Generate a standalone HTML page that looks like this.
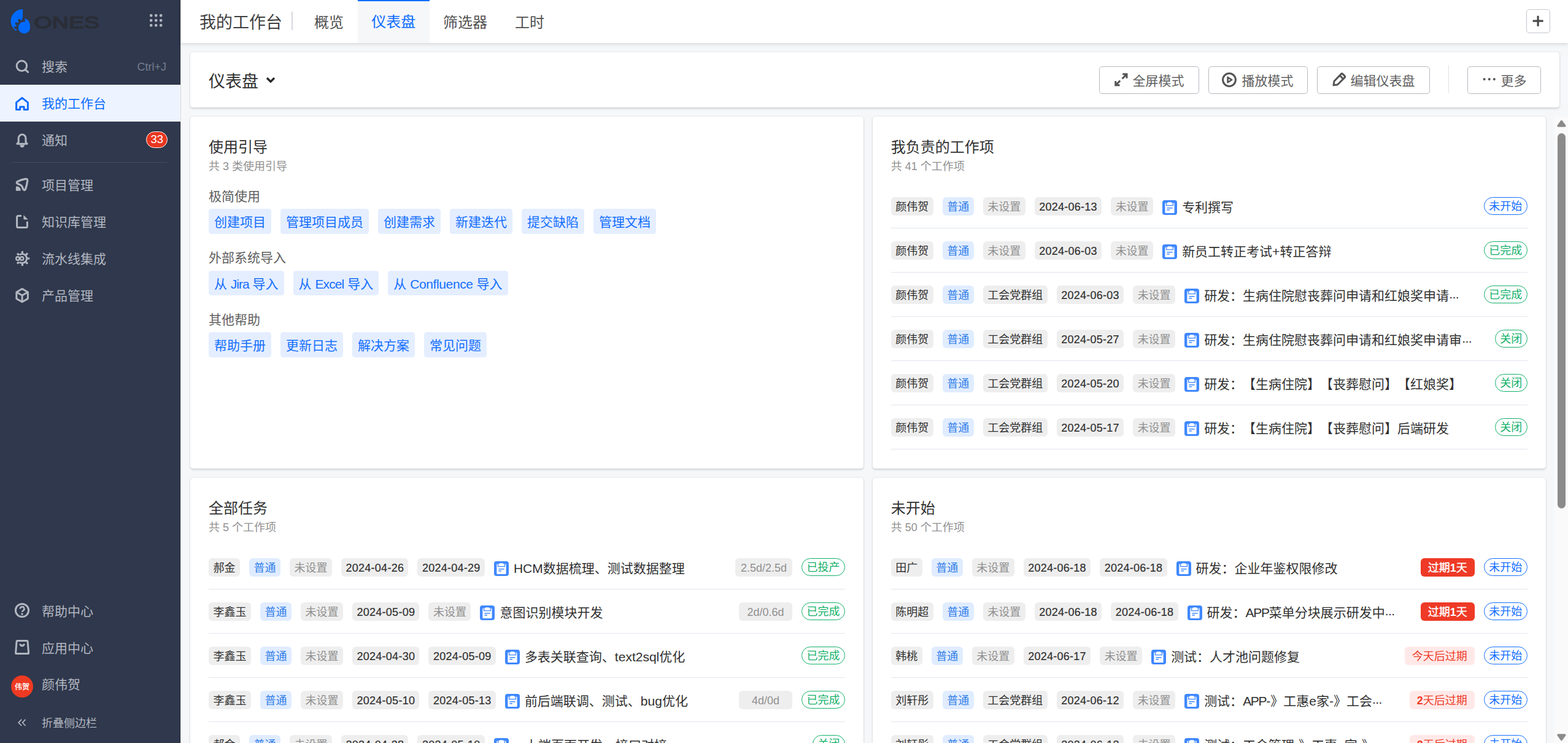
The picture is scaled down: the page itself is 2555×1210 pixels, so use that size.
<!DOCTYPE html>
<html lang="zh-CN">
<head>
<meta charset="utf-8">
<title>我的工作台 - 仪表盘</title>
<style>
*{box-sizing:border-box;margin:0;padding:0}
html,body{width:2555px;height:1210px;overflow:hidden;background:#f6f7f9}
body{font-family:"Liberation Sans","Noto Sans CJK SC",sans-serif;color:#303030;position:relative;-webkit-font-smoothing:antialiased;text-spacing-trim:space-all}
svg{display:block}
/* ---------- sidebar ---------- */
#side{position:absolute;left:0;top:0;width:294px;height:1210px;background:#2f384c;color:#b3b7c1;box-shadow:inset -1px 0 0 rgba(0,0,0,.22)}
#edge{position:absolute;left:294px;top:0;width:.8px;height:1210px;background:rgba(0,0,0,.11);z-index:5}
.logo{position:absolute;left:17px;top:15px}
.grid9{position:absolute;left:244px;top:23px}
.nav{position:absolute;left:0;width:294px;height:60px}
.nav .ic{position:absolute;left:24px;top:18px;width:24px;height:24px}
.nav .tx{position:absolute;left:68px;top:0;height:60px;line-height:62px;font-size:21px;white-space:nowrap}
.nav.act{background:#eef4ff;color:#0b6cff}
.nav .kbd{position:absolute;right:23px;top:0;line-height:62px;font-size:18px;color:#757d91}
.badge{position:absolute;left:238.2px;top:16.3px;width:35.3px;height:27.2px;border-radius:14px;background:#e8361f;border:1.8px solid #fff;color:#fff;font-size:18.5px;line-height:24.6px;text-align:center}
.sdiv{position:absolute;left:18px;top:263.5px;width:254px;height:1.5px;background:#414a5f}
.avatar{position:absolute;left:18px;top:12px;width:36px;height:36px;border-radius:50%;background:#ee3a22;color:#fff;font-size:12px;line-height:38px;text-align:center;-webkit-text-stroke:.3px #fff}
/* ---------- top bar ---------- */
#top{position:absolute;left:294px;top:0;width:2261px;height:70px;background:#fff;box-shadow:0 1.5px 6px rgba(0,0,0,.13)}
#top .ttl{position:absolute;left:31px;top:0;line-height:74px;font-size:27px;color:#404040;white-space:nowrap}
#top .vsep{position:absolute;left:181.4px;top:18.8px;width:1.6px;height:30px;background:#d6d8df}
.tab{position:absolute;top:0;height:70px;line-height:74px;font-size:24px;color:#505050;text-align:center;white-space:nowrap}
.tab.on{background:#f6f7f9;color:#0b6cff;border-top:2.6px solid #0b6cff;line-height:68.8px}
.plus{position:absolute;left:2193px;top:15px;width:39px;height:39px;border:1.5px solid #c4c7cf;border-radius:5px;background:#fff}
/* ---------- header card ---------- */
.card{position:absolute;background:#fff;border-radius:4.5px;box-shadow:0 1.5px 3.5px rgba(0,0,0,.15),0 0 1.5px rgba(0,0,0,.1)}
#hdr{left:310px;top:85px;width:2231px;height:90px}
#hdr .ttl{position:absolute;left:30px;top:0;line-height:97px;font-size:27px;color:#303030}
#hdr .chev{position:absolute;left:122px;top:38px}
.btn{position:absolute;top:23px;height:45px;border:1.5px solid #b7bac1;border-radius:5px;background:#fff;color:#606060;font-size:21px;line-height:46px;white-space:nowrap}
.btn svg{position:absolute;left:22.5px;top:9px}
.btn span{position:absolute;left:53.5px;top:0}
.hsep{position:absolute;left:2049.5px;top:21px;width:1.5px;height:45px;background:#dfe1e6}
/* ---------- scroll area ---------- */
#scroll{position:absolute;left:294px;top:182px;width:2261px;height:1028px;overflow:hidden}
.c1{left:16px;width:1097px}
.c2{left:1127.7px;width:1097px}
.r1{top:8px;height:573px}
.r2{top:596px;height:573px}
.card h3{position:absolute;left:30px;top:34.2px;font-size:24px;line-height:32px;font-weight:400;color:#303030;white-space:nowrap}
.card .sub{position:absolute;left:30px;top:68.5px;font-size:18px;line-height:24px;color:#909090;white-space:nowrap}
.sec{position:absolute;left:30px;font-size:21px;line-height:28px;color:#606060;white-space:nowrap}
.chips{position:absolute;left:30px;height:40.5px;display:flex}
.chip{height:40.5px;line-height:43.3px;padding:0 9px;margin-right:15px;border-radius:4.5px;background:#e4eeff;color:#146eff;font-size:21px;white-space:nowrap}
.rows{position:absolute;left:30px;right:30px;top:110px}
.row{height:72px;border-bottom:1.5px solid #e3e6ee;display:flex;align-items:center;position:relative;white-space:nowrap}
.p{height:30px;line-height:32.8px;padding:0 7.5px;margin-right:15px;border-radius:6px;background:#eeeeee;color:#303030;font-size:18px;flex:none}
.p.b{background:#e0ecff;color:#2f7de8}
.p.g{color:#909090}
.dico{flex:none;width:24px;height:24px;margin-right:8px;position:relative;top:2px}
.t{font-size:21px;color:#303030;line-height:30px;position:relative;top:2.6px}
.dt{letter-spacing:.26px;margin-right:-.26px;-webkit-text-stroke:.2px #303030}
.el{letter-spacing:-.5px;position:relative;top:-2.8px}
.sp{flex:1}
.st{flex:none;height:29px;line-height:29.6px;margin-bottom:1px;padding:0 7.5px;border:1.5px solid #146eff;border-radius:15px;color:#146eff;font-size:18px;background:#fff}
.st.gr{border-color:#12b069;color:#12b069}
.wt{flex:none;height:30px;line-height:32.8px;min-width:87px;padding:0 9px;margin-right:15px;border-radius:6px;background:#eeeeee;color:#909090;font-size:18px;text-align:center}
.od{flex:none;height:30px;line-height:32.8px;padding:0 12px;margin-right:15px;border-radius:6px;background:#ee3a26;color:#fff;font-size:18px;text-align:center;-webkit-text-stroke:.35px #fff}
.od b{font-weight:700;-webkit-text-stroke:0}
.od.l{background:#ffe9e8;color:#ee3a26;-webkit-text-stroke:0}
/* ---------- scrollbar ---------- */
#sb{position:absolute;left:2532.5px;top:190px;width:22.5px;height:1020px;background:#fafafa}
#sb .th{position:absolute;left:5.5px;top:27px;width:13px;height:611px;border-radius:6.5px;background:#8b8b8b}
</style>
</head>
<body>
<div id="edge"></div>
<div id="side">
  <svg class="logo" width="150" height="42" viewBox="17 15 150 42" style="overflow:visible">
    <path d="M37.05 15.1 A19.2 19.2 0 0 0 25.65 49.95 L35 46 L37.05 38 Z" fill="#006aff"/>
    <path d="M40.1 29.9 C44.6 30.8 48.4 34.6 49 42 L40.8 42 Z" fill="#006aff"/>
    <g fill="#2f384c">
      <path d="M40.7 31.9 A13.1 13.1 0 0 0 30 54 L40.7 54 Z"/>
      <rect x="-1.9" y="-16.2" width="3.8" height="4" transform="translate(39.43 44.94) rotate(-5)"/>
      <rect x="-1.9" y="-16.2" width="3.8" height="4" transform="translate(39.43 44.94) rotate(-34)"/>
      <rect x="-1.9" y="-16.2" width="3.8" height="4" transform="translate(39.43 44.94) rotate(-63)"/>
      <rect x="-1.9" y="-16.2" width="3.8" height="4" transform="translate(39.43 44.94) rotate(-91)"/>
    </g>
    <circle cx="39.43" cy="44.94" r="9.7" fill="#006aff"/>
    <text x="55.6" y="45.5" font-family="Liberation Sans, sans-serif" font-size="27.4" font-weight="400" fill="#2a2d35" stroke="#2a2d35" stroke-width="1.1" stroke-linejoin="round" textLength="106.4" lengthAdjust="spacingAndGlyphs">ONES</text>
  </svg>
  <svg class="grid9" width="21" height="21" viewBox="0 0 21 21" fill="#b0b4bf">
    <rect x="0" y="0" width="4.4" height="4.4" rx="1.6"/><rect x="8" y="0" width="4.4" height="4.4" rx="1.6"/><rect x="16" y="0" width="4.4" height="4.4" rx="1.6"/>
    <rect x="0" y="8" width="4.4" height="4.4" rx="1.6"/><rect x="8" y="8" width="4.4" height="4.4" rx="1.6"/><rect x="16" y="8" width="4.4" height="4.4" rx="1.6"/>
    <rect x="0" y="16" width="4.4" height="4.4" rx="1.6"/><rect x="8" y="16" width="4.4" height="4.4" rx="1.6"/><rect x="16" y="16" width="4.4" height="4.4" rx="1.6"/>
  </svg>

  <div class="nav" style="top:78px">
    <svg class="ic" viewBox="0 0 24 24" style="overflow:visible" fill="none" stroke="#b3b7c1" stroke-width="3" stroke-linecap="round"><circle cx="11.4" cy="11.3" r="8.2"/><path d="M17.6 17.6 L21.6 21.4"/></svg>
    <div class="tx">搜索</div><div class="kbd">Ctrl+J</div>
  </div>
  <div class="nav act" style="top:138px">
    <svg class="ic" viewBox="0 0 24 24" style="overflow:visible" fill="none" stroke="#0b6cff" stroke-width="3" stroke-linejoin="round"><path d="M2.6 22.5 V10.8 L12 3.3 L21.4 10.8 V22.5 H15.1 V18 H8.7 V22.5 Z"/></svg>
    <div class="tx">我的工作台</div>
  </div>
  <div class="nav" style="top:198px">
    <svg class="ic" viewBox="0 0 24 24" style="overflow:visible" fill="none" stroke="#b3b7c1" stroke-width="3" stroke-linejoin="round" stroke-linecap="round"><path d="M3.9 18.2 L6.2 15.4 V9 a5.9 5.9 0 0 1 11.8 0 V15.4 L20.3 18.2 Z"/><path d="M8.8 20.6 a3.3 3.3 0 0 0 6.6 0 Z" fill="#b3b7c1" stroke-width="1"/></svg>
    <div class="tx">通知</div><div class="badge">33</div>
  </div>
  <div class="sdiv"></div>
  <div class="nav" style="top:271px">
    <svg class="ic" viewBox="0 0 24 24" style="overflow:visible" fill="none" stroke="#b3b7c1" stroke-width="3" stroke-linejoin="round" stroke-linecap="round"><path d="M4 6.8 Q2 8.8 4.8 10.2 L9.6 12.4 Q11.2 13.2 12 14.8 L14 19.4 Q15.8 22 17.4 19.4 Q19.8 13 20.7 5.2 Q20.9 1.8 17.4 2.4 Q10 3.6 4 6.8 Z" stroke-width="3.2"/><path d="M1.9 21.7 V15.8 Q1.9 14.2 3.5 14.3 Q9.2 15 9.8 20.4 Q9.8 21.7 8.5 21.7 Z" fill="#b3b7c1" stroke="none"/></svg>
    <div class="tx">项目管理</div>
  </div>
  <div class="nav" style="top:331px">
    <svg class="ic" viewBox="0 0 24 24" style="overflow:visible" fill="none" stroke="#b3b7c1" stroke-width="3" stroke-linejoin="round" stroke-linecap="butt"><path d="M11 2.4 H5.6 a2 2 0 0 0 -2 2 V19.6 a2 2 0 0 0 2 2 H18.4 a2 2 0 0 0 2 -2 V11.8"/><path d="M14.4 1.2 L21.8 8.6 H15.4 a1 1 0 0 1 -1 -1 Z" fill="#b3b7c1" stroke="none"/></svg>
    <div class="tx">知识库管理</div>
  </div>
  <div class="nav" style="top:391px">
    <svg class="ic" viewBox="0 0 24 24" style="overflow:visible" fill="none" stroke="#b3b7c1" stroke-linecap="butt"><path d="M7.6 6.2 A7.4 7.4 0 1 1 7.6 17.8" stroke-width="2.8"/><g stroke-width="3.2"><path d="M12.4 3.6 V0"/><path d="M12.4 20.4 V24"/><path d="M20.6 12 H24.2"/><path d="M18.2 6.2 L21 3.4"/><path d="M18.2 17.8 L21 20.6"/><path d="M6.8 6.4 L4 3.6"/><path d="M6.8 17.6 L4 20.4"/></g><circle cx="4.9" cy="12" r="2.7" stroke-width="2.4"/><circle cx="11.6" cy="12" r="2.7" stroke-width="2.4"/></svg>
    <div class="tx">流水线集成</div>
  </div>
  <div class="nav" style="top:451px">
    <svg class="ic" viewBox="0 0 24 24" style="overflow:visible" fill="none" stroke="#b3b7c1" stroke-width="3" stroke-linejoin="round"><path d="M12.1 1.4 L21.4 6.7 V17.4 L12.1 22.7 L2.9 17.4 V6.7 Z"/><path d="M2.9 6.7 L12.1 12 L21.4 6.7 M12.1 12 V22.7"/></svg>
    <div class="tx">产品管理</div>
  </div>
  <div class="nav" style="top:965px">
    <svg class="ic" viewBox="0 0 24 24" style="overflow:visible" fill="none" stroke="#b3b7c1" stroke-width="3" stroke-linecap="round"><circle cx="12" cy="11" r="10.6"/><path d="M8.8 8.4 a3.3 3.3 0 1 1 4.9 2.9 q-1.6 .9 -1.6 2.5" stroke-width="2.6" stroke-linecap="butt"/><circle cx="12" cy="17" r="1.7" fill="#b3b7c1" stroke="none"/></svg>
    <div class="tx">帮助中心</div>
  </div>
  <div class="nav" style="top:1025px">
    <svg class="ic" viewBox="0 0 24 24" style="overflow:visible" fill="none" stroke="#b3b7c1" stroke-width="3" stroke-linejoin="round"><path d="M4.4 0.4 H19.8 Q21 0.4 21.1 1.6 L22.6 20.2 Q22.7 21.6 21.4 21.6 H2.8 Q1.5 21.6 1.6 20.2 L3.1 1.6 Q3.2 0.4 4.4 0.4 Z"/><path d="M9 5.6 a3.1 3.1 0 0 0 6.2 0" stroke-width="3.2"/></svg>
    <div class="tx">应用中心</div>
  </div>
  <div class="nav" style="top:1085px">
    <div class="avatar" style="top:15px">伟贺</div>
    <div class="tx" style="line-height:60px">颜伟贺</div>
  </div>
  <div class="nav" style="top:1147px">
    <svg style="position:absolute;left:29px;top:24px;overflow:visible" width="14" height="12" viewBox="0 0 14 12" fill="none" stroke="#b3b7c1" stroke-width="1.7"><path d="M6.2 0.6 L1.2 5.8 L6.2 11"/><path d="M12.6 0.6 L7.6 5.8 L12.6 11"/></svg>
    <div class="tx" style="font-size:18px">折叠侧边栏</div>
  </div>
</div>
<div id="top">
  <div class="ttl">我的工作台</div>
  <div class="vsep"></div>
  <div class="tab" style="left:195.5px;width:93px">概览</div>
  <div class="tab on" style="left:289px;width:116.5px">仪表盘</div>
  <div class="tab" style="left:405.5px;width:117px">筛选器</div>
  <div class="tab" style="left:522.5px;width:93px">工时</div>
  <div class="plus"><svg width="36" height="36" viewBox="0 0 36 36" fill="none" stroke="#4a4a4a" stroke-width="3.2"><path d="M9.6 18.2 H26.6 M18.1 9.7 V26.7"/></svg></div>
</div>
<div class="card" id="hdr">
  <div class="ttl">仪表盘</div>
  <svg class="chev" width="18" height="14" viewBox="0 0 18 14" fill="none" stroke="#262626" stroke-width="3.2"><path d="M3 4 L9 10 L15 4"/></svg>
  <div class="btn" style="left:1481px;width:163px">
    <svg width="24" height="24" viewBox="0 0 24 24" fill="none" stroke="#555" stroke-width="3" style="overflow:visible"><path d="M14.2 2.8 H21 V9.6 M20.4 3.4 L13.6 10.2 M9.6 20.8 H2.8 V14 M3.4 20.2 L10.2 13.4"/></svg>
    <span>全屏模式</span></div>
  <div class="btn" style="left:1659px;width:162px">
    <svg width="24" height="24" viewBox="0 0 24 24" fill="none" stroke="#555" stroke-width="3" stroke-linejoin="round" style="left:21.2px;top:8.5px;overflow:visible"><circle cx="12" cy="12" r="10.4"/><path d="M9.6 7.8 L16.2 12 L9.6 16.2 Z" stroke-width="2.6"/></svg>
    <span>播放模式</span></div>
  <div class="btn" style="left:1836px;width:184px">
    <svg width="24" height="24" viewBox="0 0 24 24" fill="none" stroke="#555" stroke-width="3" stroke-linejoin="round" style="overflow:visible"><path d="M15.2 2.6 Q16.6 1.2 18 2.6 L21 5.6 Q22.4 7 21 8.4 L9.6 19.8 L3 20.8 L4 14.2 Z M13.2 5 L18.6 10.4"/></svg>
    <span>编辑仪表盘</span></div>
  <div class="hsep"></div>
  <div class="btn" style="left:2081px;width:120px">
    <svg width="24" height="24" viewBox="0 0 24 24" fill="#555"><circle cx="3.6" cy="11" r="2.05"/><circle cx="11.7" cy="11" r="2.05"/><circle cx="19.8" cy="11" r="2.05"/></svg>
    <span>更多</span></div>
</div>
<div id="scroll">
<div class="card c1 r1"><h3>使用引导</h3><div class="sub">共 3 类使用引导</div>
<div class="sec" style="top:116px">极简使用</div>
<div class="chips" style="top:150px"><span class="chip">创建项目</span><span class="chip">管理项目成员</span><span class="chip">创建需求</span><span class="chip">新建迭代</span><span class="chip">提交缺陷</span><span class="chip">管理文档</span></div>
<div class="sec" style="top:215.7px">外部系统导入</div>
<div class="chips" style="top:250.5px"><span class="chip">从 <span style="letter-spacing:-1px">Jira</span> 导入</span><span class="chip">从 <span style="letter-spacing:-.86px">Excel</span> 导入</span><span class="chip">从 <span style="letter-spacing:-.37px">Confluence</span> 导入</span></div>
<div class="sec" style="top:316.7px">其他帮助</div>
<div class="chips" style="top:351px"><span class="chip">帮助手册</span><span class="chip">更新日志</span><span class="chip">解决方案</span><span class="chip">常见问题</span></div>
</div>
<div class="card c2 r1"><h3>我负责的工作项</h3><div class="sub">共 41 个工作项</div>
<div class="rows">
<div class="row"><span class="p">颜伟贺</span><span class="p b">普通</span><span class="p g">未设置</span><span class="p"><span class="dt">2024-06-13</span></span><span class="p g">未设置</span><svg class="dico" viewBox="0 0 24 24"><rect width="24" height="24" rx="4" fill="#4088ff"/><path d="M5.6 4.6 H8 L9.6 3.2 H14.4 L16 4.6 H18.4 Q19.6 4.6 19.6 5.8 V19.8 Q19.6 21 18.4 21 H5.6 Q4.4 21 4.4 19.8 V5.8 Q4.4 4.6 5.6 4.6 Z" fill="#fff"/><path d="M6.6 4.6 V8.6 H17.4 V4.6" fill="none" stroke="#4088ff" stroke-width="1.3"/><path d="M7.4 12.7 H16.6 M7.4 15.8 H12" stroke="#4088ff" stroke-width="1.4" fill="none"/></svg><span class="t">专利撰写</span><span class="sp"></span><span class="st">未开始</span></div>
<div class="row"><span class="p">颜伟贺</span><span class="p b">普通</span><span class="p g">未设置</span><span class="p"><span class="dt">2024-06-03</span></span><span class="p g">未设置</span><svg class="dico" viewBox="0 0 24 24"><rect width="24" height="24" rx="4" fill="#4088ff"/><path d="M5.6 4.6 H8 L9.6 3.2 H14.4 L16 4.6 H18.4 Q19.6 4.6 19.6 5.8 V19.8 Q19.6 21 18.4 21 H5.6 Q4.4 21 4.4 19.8 V5.8 Q4.4 4.6 5.6 4.6 Z" fill="#fff"/><path d="M6.6 4.6 V8.6 H17.4 V4.6" fill="none" stroke="#4088ff" stroke-width="1.3"/><path d="M7.4 12.7 H16.6 M7.4 15.8 H12" stroke="#4088ff" stroke-width="1.4" fill="none"/></svg><span class="t">新员工转正考试+转正答辩</span><span class="sp"></span><span class="st gr">已完成</span></div>
<div class="row"><span class="p">颜伟贺</span><span class="p b">普通</span><span class="p">工会党群组</span><span class="p"><span class="dt">2024-06-03</span></span><span class="p g">未设置</span><svg class="dico" viewBox="0 0 24 24"><rect width="24" height="24" rx="4" fill="#4088ff"/><path d="M5.6 4.6 H8 L9.6 3.2 H14.4 L16 4.6 H18.4 Q19.6 4.6 19.6 5.8 V19.8 Q19.6 21 18.4 21 H5.6 Q4.4 21 4.4 19.8 V5.8 Q4.4 4.6 5.6 4.6 Z" fill="#fff"/><path d="M6.6 4.6 V8.6 H17.4 V4.6" fill="none" stroke="#4088ff" stroke-width="1.3"/><path d="M7.4 12.7 H16.6 M7.4 15.8 H12" stroke="#4088ff" stroke-width="1.4" fill="none"/></svg><span class="t">研发：生病住院慰丧葬问申请和红娘奖申请<span class="el">...</span></span><span class="sp"></span><span class="st gr">已完成</span></div>
<div class="row"><span class="p">颜伟贺</span><span class="p b">普通</span><span class="p">工会党群组</span><span class="p"><span class="dt">2024-05-27</span></span><span class="p g">未设置</span><svg class="dico" viewBox="0 0 24 24"><rect width="24" height="24" rx="4" fill="#4088ff"/><path d="M5.6 4.6 H8 L9.6 3.2 H14.4 L16 4.6 H18.4 Q19.6 4.6 19.6 5.8 V19.8 Q19.6 21 18.4 21 H5.6 Q4.4 21 4.4 19.8 V5.8 Q4.4 4.6 5.6 4.6 Z" fill="#fff"/><path d="M6.6 4.6 V8.6 H17.4 V4.6" fill="none" stroke="#4088ff" stroke-width="1.3"/><path d="M7.4 12.7 H16.6 M7.4 15.8 H12" stroke="#4088ff" stroke-width="1.4" fill="none"/></svg><span class="t">研发：生病住院慰丧葬问申请和红娘奖申请审<span class="el">...</span></span><span class="sp"></span><span class="st gr">关闭</span></div>
<div class="row"><span class="p">颜伟贺</span><span class="p b">普通</span><span class="p">工会党群组</span><span class="p"><span class="dt">2024-05-20</span></span><span class="p g">未设置</span><svg class="dico" viewBox="0 0 24 24"><rect width="24" height="24" rx="4" fill="#4088ff"/><path d="M5.6 4.6 H8 L9.6 3.2 H14.4 L16 4.6 H18.4 Q19.6 4.6 19.6 5.8 V19.8 Q19.6 21 18.4 21 H5.6 Q4.4 21 4.4 19.8 V5.8 Q4.4 4.6 5.6 4.6 Z" fill="#fff"/><path d="M6.6 4.6 V8.6 H17.4 V4.6" fill="none" stroke="#4088ff" stroke-width="1.3"/><path d="M7.4 12.7 H16.6 M7.4 15.8 H12" stroke="#4088ff" stroke-width="1.4" fill="none"/></svg><span class="t">研发：【生病住院】【丧葬慰问】【红娘奖】</span><span class="sp"></span><span class="st gr">关闭</span></div>
<div class="row"><span class="p">颜伟贺</span><span class="p b">普通</span><span class="p">工会党群组</span><span class="p"><span class="dt">2024-05-17</span></span><span class="p g">未设置</span><svg class="dico" viewBox="0 0 24 24"><rect width="24" height="24" rx="4" fill="#4088ff"/><path d="M5.6 4.6 H8 L9.6 3.2 H14.4 L16 4.6 H18.4 Q19.6 4.6 19.6 5.8 V19.8 Q19.6 21 18.4 21 H5.6 Q4.4 21 4.4 19.8 V5.8 Q4.4 4.6 5.6 4.6 Z" fill="#fff"/><path d="M6.6 4.6 V8.6 H17.4 V4.6" fill="none" stroke="#4088ff" stroke-width="1.3"/><path d="M7.4 12.7 H16.6 M7.4 15.8 H12" stroke="#4088ff" stroke-width="1.4" fill="none"/></svg><span class="t">研发：【生病住院】【丧葬慰问】后端研发</span><span class="sp"></span><span class="st gr">关闭</span></div>
</div></div>
<div class="card c1 r2"><h3>全部任务</h3><div class="sub">共 5 个工作项</div>
<div class="rows">
<div class="row"><span class="p">郝金</span><span class="p b">普通</span><span class="p g">未设置</span><span class="p"><span class="dt">2024-04-26</span></span><span class="p"><span class="dt">2024-04-29</span></span><svg class="dico" viewBox="0 0 24 24"><rect width="24" height="24" rx="4" fill="#4088ff"/><path d="M5.6 4.6 H8 L9.6 3.2 H14.4 L16 4.6 H18.4 Q19.6 4.6 19.6 5.8 V19.8 Q19.6 21 18.4 21 H5.6 Q4.4 21 4.4 19.8 V5.8 Q4.4 4.6 5.6 4.6 Z" fill="#fff"/><path d="M6.6 4.6 V8.6 H17.4 V4.6" fill="none" stroke="#4088ff" stroke-width="1.3"/><path d="M7.4 12.7 H16.6 M7.4 15.8 H12" stroke="#4088ff" stroke-width="1.4" fill="none"/></svg><span class="t">HCM数据梳理、测试数据整理</span><span class="sp"></span><span class="wt">2.5d/2.5d</span><span class="st gr">已投产</span></div>
<div class="row"><span class="p">李鑫玉</span><span class="p b">普通</span><span class="p g">未设置</span><span class="p"><span class="dt">2024-05-09</span></span><span class="p g">未设置</span><svg class="dico" viewBox="0 0 24 24"><rect width="24" height="24" rx="4" fill="#4088ff"/><path d="M5.6 4.6 H8 L9.6 3.2 H14.4 L16 4.6 H18.4 Q19.6 4.6 19.6 5.8 V19.8 Q19.6 21 18.4 21 H5.6 Q4.4 21 4.4 19.8 V5.8 Q4.4 4.6 5.6 4.6 Z" fill="#fff"/><path d="M6.6 4.6 V8.6 H17.4 V4.6" fill="none" stroke="#4088ff" stroke-width="1.3"/><path d="M7.4 12.7 H16.6 M7.4 15.8 H12" stroke="#4088ff" stroke-width="1.4" fill="none"/></svg><span class="t">意图识别模块开发</span><span class="sp"></span><span class="wt">2d/0.6d</span><span class="st gr">已完成</span></div>
<div class="row"><span class="p">李鑫玉</span><span class="p b">普通</span><span class="p g">未设置</span><span class="p"><span class="dt">2024-04-30</span></span><span class="p"><span class="dt">2024-05-09</span></span><svg class="dico" viewBox="0 0 24 24"><rect width="24" height="24" rx="4" fill="#4088ff"/><path d="M5.6 4.6 H8 L9.6 3.2 H14.4 L16 4.6 H18.4 Q19.6 4.6 19.6 5.8 V19.8 Q19.6 21 18.4 21 H5.6 Q4.4 21 4.4 19.8 V5.8 Q4.4 4.6 5.6 4.6 Z" fill="#fff"/><path d="M6.6 4.6 V8.6 H17.4 V4.6" fill="none" stroke="#4088ff" stroke-width="1.3"/><path d="M7.4 12.7 H16.6 M7.4 15.8 H12" stroke="#4088ff" stroke-width="1.4" fill="none"/></svg><span class="t">多表关联查询、text2sql优化</span><span class="sp"></span><span class="st gr">已完成</span></div>
<div class="row"><span class="p">李鑫玉</span><span class="p b">普通</span><span class="p g">未设置</span><span class="p"><span class="dt">2024-05-10</span></span><span class="p"><span class="dt">2024-05-13</span></span><svg class="dico" viewBox="0 0 24 24"><rect width="24" height="24" rx="4" fill="#4088ff"/><path d="M5.6 4.6 H8 L9.6 3.2 H14.4 L16 4.6 H18.4 Q19.6 4.6 19.6 5.8 V19.8 Q19.6 21 18.4 21 H5.6 Q4.4 21 4.4 19.8 V5.8 Q4.4 4.6 5.6 4.6 Z" fill="#fff"/><path d="M6.6 4.6 V8.6 H17.4 V4.6" fill="none" stroke="#4088ff" stroke-width="1.3"/><path d="M7.4 12.7 H16.6 M7.4 15.8 H12" stroke="#4088ff" stroke-width="1.4" fill="none"/></svg><span class="t">前后端联调、测试、bug优化</span><span class="sp"></span><span class="wt">4d/0d</span><span class="st gr">已完成</span></div>
<div class="row"><span class="p">郝金</span><span class="p b">普通</span><span class="p g">未设置</span><span class="p"><span class="dt">2024-04-28</span></span><span class="p"><span class="dt">2024-05-10</span></span><svg class="dico" viewBox="0 0 24 24"><rect width="24" height="24" rx="4" fill="#4088ff"/><path d="M5.6 4.6 H8 L9.6 3.2 H14.4 L16 4.6 H18.4 Q19.6 4.6 19.6 5.8 V19.8 Q19.6 21 18.4 21 H5.6 Q4.4 21 4.4 19.8 V5.8 Q4.4 4.6 5.6 4.6 Z" fill="#fff"/><path d="M6.6 4.6 V8.6 H17.4 V4.6" fill="none" stroke="#4088ff" stroke-width="1.3"/><path d="M7.4 12.7 H16.6 M7.4 15.8 H12" stroke="#4088ff" stroke-width="1.4" fill="none"/></svg><span class="t"><span style="letter-spacing:-1.5px">pc</span>上端页面开发、接口对接</span><span class="sp"></span><span class="st gr">关闭</span></div>
</div></div>
<div class="card c2 r2"><h3>未开始</h3><div class="sub">共 50 个工作项</div>
<div class="rows">
<div class="row"><span class="p">田广</span><span class="p b">普通</span><span class="p g">未设置</span><span class="p"><span class="dt">2024-06-18</span></span><span class="p"><span class="dt">2024-06-18</span></span><svg class="dico" viewBox="0 0 24 24"><rect width="24" height="24" rx="4" fill="#4088ff"/><path d="M5.6 4.6 H8 L9.6 3.2 H14.4 L16 4.6 H18.4 Q19.6 4.6 19.6 5.8 V19.8 Q19.6 21 18.4 21 H5.6 Q4.4 21 4.4 19.8 V5.8 Q4.4 4.6 5.6 4.6 Z" fill="#fff"/><path d="M6.6 4.6 V8.6 H17.4 V4.6" fill="none" stroke="#4088ff" stroke-width="1.3"/><path d="M7.4 12.7 H16.6 M7.4 15.8 H12" stroke="#4088ff" stroke-width="1.4" fill="none"/></svg><span class="t">研发：企业年鉴权限修改</span><span class="sp"></span><span class="od">过期<b>1</b>天</span><span class="st">未开始</span></div>
<div class="row"><span class="p">陈明超</span><span class="p b">普通</span><span class="p g">未设置</span><span class="p"><span class="dt">2024-06-18</span></span><span class="p"><span class="dt">2024-06-18</span></span><svg class="dico" viewBox="0 0 24 24"><rect width="24" height="24" rx="4" fill="#4088ff"/><path d="M5.6 4.6 H8 L9.6 3.2 H14.4 L16 4.6 H18.4 Q19.6 4.6 19.6 5.8 V19.8 Q19.6 21 18.4 21 H5.6 Q4.4 21 4.4 19.8 V5.8 Q4.4 4.6 5.6 4.6 Z" fill="#fff"/><path d="M6.6 4.6 V8.6 H17.4 V4.6" fill="none" stroke="#4088ff" stroke-width="1.3"/><path d="M7.4 12.7 H16.6 M7.4 15.8 H12" stroke="#4088ff" stroke-width="1.4" fill="none"/></svg><span class="t">研发：<span style="letter-spacing:-1.3px">APP</span>菜单分块展示研发中<span class="el">...</span></span><span class="sp"></span><span class="od">过期<b>1</b>天</span><span class="st">未开始</span></div>
<div class="row"><span class="p">韩桃</span><span class="p b">普通</span><span class="p g">未设置</span><span class="p"><span class="dt">2024-06-17</span></span><span class="p g">未设置</span><svg class="dico" viewBox="0 0 24 24"><rect width="24" height="24" rx="4" fill="#4088ff"/><path d="M5.6 4.6 H8 L9.6 3.2 H14.4 L16 4.6 H18.4 Q19.6 4.6 19.6 5.8 V19.8 Q19.6 21 18.4 21 H5.6 Q4.4 21 4.4 19.8 V5.8 Q4.4 4.6 5.6 4.6 Z" fill="#fff"/><path d="M6.6 4.6 V8.6 H17.4 V4.6" fill="none" stroke="#4088ff" stroke-width="1.3"/><path d="M7.4 12.7 H16.6 M7.4 15.8 H12" stroke="#4088ff" stroke-width="1.4" fill="none"/></svg><span class="t">测试：人才池问题修复</span><span class="sp"></span><span class="od l">今天后过期</span><span class="st">未开始</span></div>
<div class="row"><span class="p">刘轩彤</span><span class="p b">普通</span><span class="p">工会党群组</span><span class="p"><span class="dt">2024-06-12</span></span><span class="p g">未设置</span><svg class="dico" viewBox="0 0 24 24"><rect width="24" height="24" rx="4" fill="#4088ff"/><path d="M5.6 4.6 H8 L9.6 3.2 H14.4 L16 4.6 H18.4 Q19.6 4.6 19.6 5.8 V19.8 Q19.6 21 18.4 21 H5.6 Q4.4 21 4.4 19.8 V5.8 Q4.4 4.6 5.6 4.6 Z" fill="#fff"/><path d="M6.6 4.6 V8.6 H17.4 V4.6" fill="none" stroke="#4088ff" stroke-width="1.3"/><path d="M7.4 12.7 H16.6 M7.4 15.8 H12" stroke="#4088ff" stroke-width="1.4" fill="none"/></svg><span class="t">测试：<span style="letter-spacing:-1.3px">APP</span>-》工惠e家-》工会<span class="el">...</span></span><span class="sp"></span><span class="od l"><b>2</b>天后过期</span><span class="st">未开始</span></div>
<div class="row"><span class="p">刘轩彤</span><span class="p b">普通</span><span class="p">工会党群组</span><span class="p"><span class="dt">2024-06-12</span></span><span class="p g">未设置</span><svg class="dico" viewBox="0 0 24 24"><rect width="24" height="24" rx="4" fill="#4088ff"/><path d="M5.6 4.6 H8 L9.6 3.2 H14.4 L16 4.6 H18.4 Q19.6 4.6 19.6 5.8 V19.8 Q19.6 21 18.4 21 H5.6 Q4.4 21 4.4 19.8 V5.8 Q4.4 4.6 5.6 4.6 Z" fill="#fff"/><path d="M6.6 4.6 V8.6 H17.4 V4.6" fill="none" stroke="#4088ff" stroke-width="1.3"/><path d="M7.4 12.7 H16.6 M7.4 15.8 H12" stroke="#4088ff" stroke-width="1.4" fill="none"/></svg><span class="t">测试：工会管理-》工惠e家-》<span class="el">...</span></span><span class="sp"></span><span class="od l"><b>2</b>天后过期</span><span class="st">未开始</span></div>
</div></div>
</div>
<div id="sb"><svg style="position:absolute;left:4.5px;top:5.2px;overflow:visible" width="15" height="12" viewBox="0 0 15 12"><path d="M7.4 2.6 L12.8 10 H2 Z" fill="#8b8b8b" stroke="#8b8b8b" stroke-width="3.4" stroke-linejoin="round"/></svg><div class="th"></div><svg style="position:absolute;left:4.5px;top:1005.2px;overflow:visible" width="15" height="12" viewBox="0 0 15 12"><path d="M7.4 9.4 L12.8 2 H2 Z" fill="#8b8b8b" stroke="#8b8b8b" stroke-width="3.4" stroke-linejoin="round"/></svg></div>
</body>
</html>
